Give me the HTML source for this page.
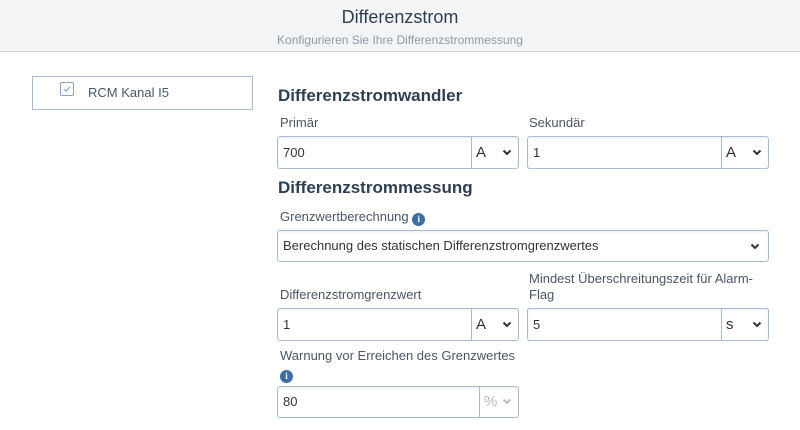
<!DOCTYPE html>
<html><head><meta charset="utf-8"><style>
*{box-sizing:border-box;margin:0;padding:0}
body{width:800px;height:430px;background:#fff;font-family:"Liberation Sans",sans-serif;color:#3d4a5a;position:relative;overflow:hidden}
.hdr{position:absolute;left:0;top:0;width:800px;height:52px;background:#f3f4f6;border-bottom:1px solid #d3d6da}
.t1{position:absolute;left:0;width:800px;text-align:center;top:7px;font-size:18px;color:#2f3e50}
.t2{position:absolute;left:0;width:800px;text-align:center;top:33px;font-size:12px;color:#8e99a6}
.a{position:absolute}
.side{left:32px;top:76px;width:221px;height:34px;border:1px solid #a9bcd3}
.cb{left:60px;top:82px;width:14px;height:14px;border:1px solid #8aa3c2;border-radius:2px}
.h{font-size:17px;font-weight:bold;color:#2f3e50;left:278px}
.l{font-size:13px;color:#4a5666}
.in{border:1px solid #a9bcd3;border-radius:3px;height:33px;font-size:13px;color:#333;padding-left:5px;line-height:31px;box-shadow:inset 0 1px 2px rgba(0,0,0,.08)}
.u{position:absolute;top:0;right:0;height:31px;border-left:1px solid #a9bcd3;font-size:15px;color:#333;padding-left:4px}
.u svg,.ch{position:absolute;right:6px;top:12px}
.i{display:inline-block;width:13px;height:13px;border-radius:50%;background:#3f6ea3;color:#fff;font-size:9px;font-weight:bold;text-align:center;line-height:13px;font-family:"Liberation Serif",serif;vertical-align:-1px}
</style></head><body>
<div class="hdr"><div class="t1">Differenzstrom</div><div class="t2">Konfigurieren Sie Ihre Differenzstrommessung</div></div>
<div class="a side"></div>
<div class="a cb"><svg width="12" height="12" viewBox="0 0 12 12" style="position:absolute;left:0;top:0"><path d="M3 6.2 L5 8.2 L9 3.8" fill="none" stroke="#7b93b3" stroke-width="1"/></svg></div>
<div class="a" style="left:88px;top:85px;font-size:13px;color:#4a5666">RCM Kanal I5</div>

<div class="a h" style="top:86px">Differenzstromwandler</div>
<div class="a l" style="left:280px;top:115px">Primär</div>
<div class="a l" style="left:529px;top:115px">Sekundär</div>
<div class="a in" style="left:277px;top:136px;width:242px">700<div class="u" style="width:47px">A<svg width="10" height="7" viewBox="0 0 10 7"><path d="M1.5 1.5 L5 5 L8.5 1.5" fill="none" stroke="#333" stroke-width="2"/></svg></div></div>
<div class="a in" style="left:527px;top:136px;width:242px">1<div class="u" style="width:47px">A<svg width="10" height="7" viewBox="0 0 10 7"><path d="M1.5 1.5 L5 5 L8.5 1.5" fill="none" stroke="#333" stroke-width="2"/></svg></div></div>

<div class="a h" style="top:178px">Differenzstrommessung</div>
<div class="a l" style="left:280px;top:209px">Grenzwertberechnung <span class="i">i</span></div>
<div class="a in" style="left:277px;top:230px;width:492px;height:32px;line-height:30px">Berechnung des statischen Differenzstromgrenzwertes<svg class="ch" style="right:8px" width="10" height="7" viewBox="0 0 10 7"><path d="M1.5 1.5 L5 5 L8.5 1.5" fill="none" stroke="#333" stroke-width="2"/></svg></div>

<div class="a l" style="left:529px;top:271px;width:240px;line-height:16px">Mindest Überschreitungszeit für Alarm-Flag</div>
<div class="a l" style="left:280px;top:287px">Differenzstromgrenzwert</div>
<div class="a in" style="left:277px;top:308px;width:242px">1<div class="u" style="width:47px">A<svg width="10" height="7" viewBox="0 0 10 7"><path d="M1.5 1.5 L5 5 L8.5 1.5" fill="none" stroke="#333" stroke-width="2"/></svg></div></div>
<div class="a in" style="left:527px;top:308px;width:242px">5<div class="u" style="width:47px">s<svg width="10" height="7" viewBox="0 0 10 7"><path d="M1.5 1.5 L5 5 L8.5 1.5" fill="none" stroke="#333" stroke-width="2"/></svg></div></div>

<div class="a l" style="left:280px;top:348px">Warnung vor Erreichen des Grenzwertes</div>
<div class="a" style="left:280px;top:365px"><span class="i">i</span></div>
<div class="a in" style="left:277px;top:386px;width:242px;height:32px;line-height:30px">80<div class="u" style="width:39px;height:30px;color:#b5bcc5;line-height:30px">%<svg style="top:11px" width="10" height="7" viewBox="0 0 10 7"><path d="M1.5 1.5 L5 5 L8.5 1.5" fill="none" stroke="#b5bcc5" stroke-width="2"/></svg></div></div>
</body></html>
